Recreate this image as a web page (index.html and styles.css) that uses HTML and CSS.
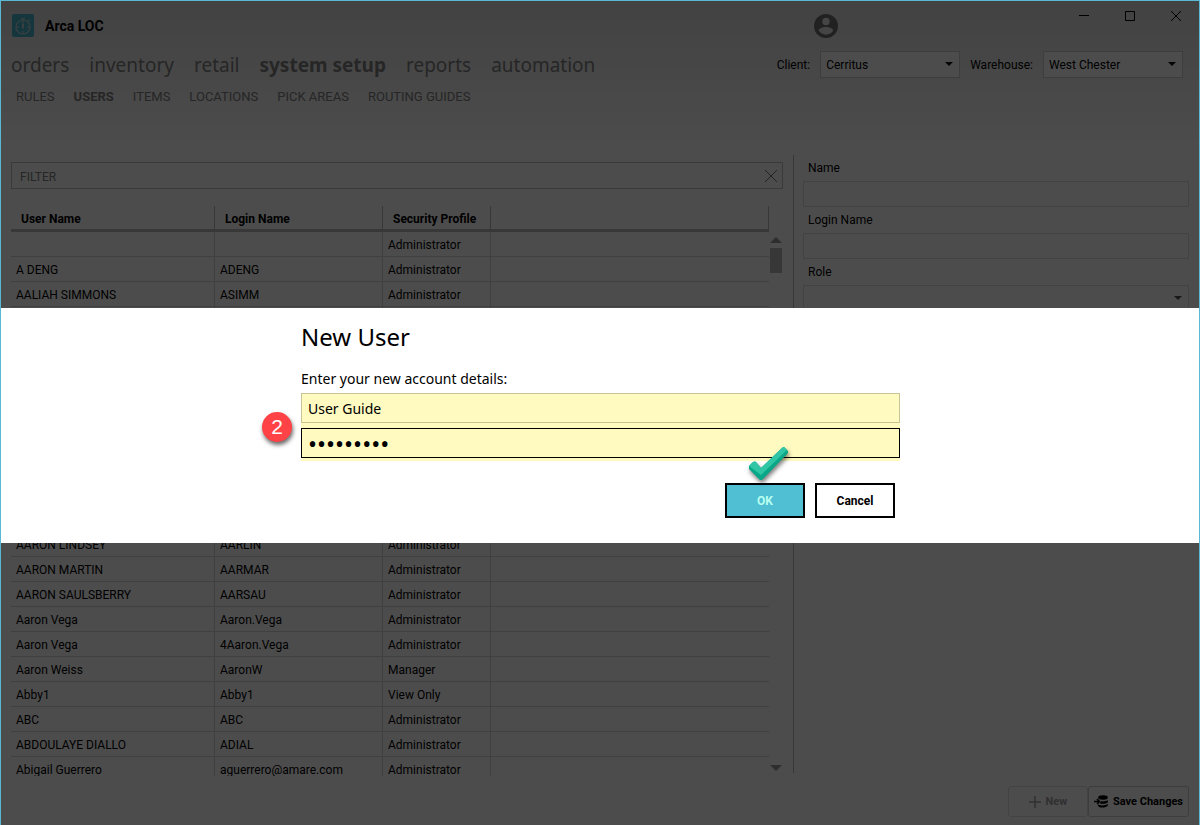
FILE: index.html
```html
<!DOCTYPE html>
<html lang="en">
<head>
<meta charset="utf-8">
<title>Arca LOC</title>
<link rel="stylesheet" href="styles.css">
</head>
<body>
<div class="window">
  <header class="titlebar">
    <svg class="logo" viewBox="0 0 22 23" aria-hidden="true">
      <rect width="22" height="23" rx="2" fill="#48b4cc"/>
      <g fill="none" stroke="#c4d8dc" stroke-width="1.2">
        <circle cx="11" cy="13" r="7"/>
        <path d="M11 6V4M9 4.500h4M11 7v2M11 17v3M4 13h3M15 13h3M16 7l2-1"/>
        <path d="M11 9.500v5" stroke-width="2"/>
      </g>
    </svg>
    <h1 class="app-name">Arca LOC</h1>
    <div class="title-right">
      <button class="avatar" aria-label="Account">
        <svg viewBox="0 0 24 24" width="24" height="24"><circle cx="12" cy="12" r="12" fill="#707070"/><circle cx="12" cy="7.500" r="3.700" fill="#e6e6e6"/><path d="M4.800 16.800c0-2.400 4.600-3.700 7.200-3.700s7.200 1.300 7.200 3.700c-1.500 2.300-4.200 3.900-7.200 3.900s-5.700-1.600-7.200-3.900z" fill="#e6e6e6"/></svg>
      </button>
      <div class="window-controls">
        <button class="win-btn" aria-label="Minimize"><svg viewBox="0 0 10 10"><path d="M0 4.500h10"/></svg></button>
        <button class="win-btn" aria-label="Maximize"><svg viewBox="0 0 10 10"><path d="M.5.5h9v9h-9z"/></svg></button>
        <button class="win-btn" aria-label="Close"><svg viewBox="0 0 10 10"><path d="M0 0l10 10M10 0L0 10"/></svg></button>
      </div>
    </div>
  </header>

  <div class="navbar">
    <nav class="main-nav" aria-label="Main">
      <a href="#">orders</a><a href="#">inventory</a><a href="#">retail</a><a href="#" class="current">system setup</a><a href="#">reports</a><a href="#">automation</a>
    </nav>
    <div class="context">
      <label for="client">Client:</label>
      <span class="select-box"><select id="client"><option>Cerritus</option></select></span>
      <label for="warehouse">Warehouse:</label>
      <span class="select-box"><select id="warehouse"><option>West Chester</option></select></span>
    </div>
  </div>
  <nav class="sub-nav" aria-label="System setup">
    <a href="#">RULES</a><a href="#" class="current">USERS</a><a href="#">ITEMS</a><a href="#">LOCATIONS</a><a href="#">PICK AREAS</a><a href="#">ROUTING GUIDES</a>
  </nav>

  <main class="workspace">
    <section class="list-pane">
      <div class="filter">
        <input type="text" placeholder="FILTER" aria-label="Filter">
        <button class="clear" aria-label="Clear filter"><svg viewBox="0 0 12 12" width="12" height="12"><path d="M0 0l12 12M12 0L0 12"/></svg></button>
      </div>
      <div class="grid">
        <div class="table-clip">
          <table class="users">
            <colgroup><col class="c-user"><col class="c-login"><col class="c-profile"><col></colgroup>
            <thead><tr><th>User Name</th><th>Login Name</th><th>Security Profile</th><th></th></tr></thead>
            <tbody>
              <tr><td></td><td></td><td>Administrator</td><td></td></tr>
              <tr><td>A DENG</td><td>ADENG</td><td>Administrator</td><td></td></tr>
              <tr><td>AALIAH SIMMONS</td><td>ASIMM</td><td>Administrator</td><td></td></tr>
              <tr><td></td><td></td><td></td><td></td></tr>
              <tr><td></td><td></td><td></td><td></td></tr>
              <tr><td></td><td></td><td></td><td></td></tr>
              <tr><td></td><td></td><td></td><td></td></tr>
              <tr><td></td><td></td><td></td><td></td></tr>
              <tr><td></td><td></td><td></td><td></td></tr>
              <tr><td></td><td></td><td></td><td></td></tr>
              <tr><td></td><td></td><td></td><td></td></tr>
              <tr><td></td><td></td><td></td><td></td></tr>
              <tr><td>AARON LINDSEY</td><td>AARLIN</td><td>Administrator</td><td></td></tr>
              <tr><td>AARON MARTIN</td><td>AARMAR</td><td>Administrator</td><td></td></tr>
              <tr><td>AARON SAULSBERRY</td><td>AARSAU</td><td>Administrator</td><td></td></tr>
              <tr><td>Aaron Vega</td><td>Aaron.Vega</td><td>Administrator</td><td></td></tr>
              <tr><td>Aaron Vega</td><td>4Aaron.Vega</td><td>Administrator</td><td></td></tr>
              <tr><td>Aaron Weiss</td><td>AaronW</td><td>Manager</td><td></td></tr>
              <tr><td>Abby1</td><td>Abby1</td><td>View Only</td><td></td></tr>
              <tr><td>ABC</td><td>ABC</td><td>Administrator</td><td></td></tr>
              <tr><td>ABDOULAYE DIALLO</td><td>ADIAL</td><td>Administrator</td><td></td></tr>
              <tr><td>Abigail Guerrero</td><td>aguerrero@amare.com</td><td>Administrator</td><td></td></tr>
            </tbody>
          </table>
        </div>
        <div class="scrollbar" aria-hidden="true">
          <span class="arrow-up"></span><span class="thumb"></span><span class="arrow-down"></span>
        </div>
      </div>
    </section>
    <section class="detail-pane">
      <label for="name">Name</label>
      <input id="name" type="text">
      <label for="login">Login Name</label>
      <input id="login" type="text">
      <label for="role">Role</label>
      <span class="select-box small"><select id="role"><option></option></select></span>
    </section>
  </main>

  <footer class="actions">
    <button class="action" disabled><svg viewBox="0 0 12 12" width="12" height="12"><path d="M6 0v12M0 6h12" stroke="currentColor" stroke-width="1.500"/></svg>New</button>
    <button class="action save"><svg viewBox="0 0 14 13" width="14" height="13"><ellipse cx="9" cy="2.500" rx="4.800" ry="2.200"/><path d="M5 5.500c2 1.300 6.500 1.300 8.800-.5v2.200C12 9 8 9.200 5.500 8.200L7 6.700zM4 9.500c3 1.500 8 1.200 9.800-.7v1.700c-2 2.600-8.500 2.800-9.800.2z"/><path d="M0 6.500h5M3 4l2.500 2.500L3 9" fill="none" stroke="currentColor" stroke-width="1.500"/></svg>Save Changes</button>
  </footer>

  <div class="overlay">
    <div class="dialog" role="dialog" aria-modal="true" aria-labelledby="dialog-title">
      <form class="dialog-body">
        <h2 id="dialog-title">New User</h2>
        <p id="dialog-text">Enter your new account details:</p>
        <div class="fields">
          <input type="text" value="User Guide" aria-label="User name">
          <input class="focused" type="password" value="userguide" aria-label="Password">
          <span class="step">2</span>
        </div>
        <div class="buttons">
          <button type="button" class="ok">OK</button>
          <button type="button">Cancel</button>
          <svg class="check" viewBox="0 0 44 38" aria-hidden="true">
            <path d="M2 20l4-4q2-1 3 0l5 6L35 2q2-2 3 0l3 3v2L15 34h-2L2 23z" fill="#08a787"/>
            <path d="M2 20l4-4q2-1 3 0l5 6L35 2q2-2 3 0l2 2L14 29z" fill="#30c5a5"/>
          </svg>
        </div>
      </form>
    </div>
  </div>
</div>
</body>
</html>
```
FILE: styles.css
```css
* { box-sizing: border-box; }

body {
  margin: 0;
  font: 12px/16px Roboto, "Noto Sans", sans-serif;
  color: #000;
}

button, input, select { font: inherit; color: inherit; margin: 0; }
button { padding: 0; border: 0; background: none; }
a { color: inherit; text-decoration: none; }
svg { display: block; flex: none; }

.window {
  position: relative;
  display: flex;
  flex-direction: column;
  height: 100vh;
  min-height: 600px;
  overflow: hidden;
  border: 1px solid #5bb8d4;
  border-bottom: 0;
  background: linear-gradient(#dedede, #fff 150px);
}

/* Title bar */
.titlebar { display: flex; align-items: center; height: 49px; padding-left: 11px; }
.logo { width: 22px; height: 23px; }
.app-name { flex: 1; margin: 0 0 0 11px; font-size: 14px; line-height: 20px; font-weight: bold; }
.title-right { display: flex; justify-content: space-between; align-items: center; align-self: stretch; width: 385px; }
.window-controls { display: flex; align-self: flex-start; }
.win-btn { display: grid; place-items: center; width: 46px; height: 30px; }
.win-btn svg { width: 10px; height: 10px; fill: none; stroke: #000; }

/* Navigation */
.navbar { display: flex; justify-content: space-between; align-items: center; height: 28px; padding: 0 16px 0 10px; }
.main-nav { display: flex; gap: 20px; padding-top: 2px; font-family: "Noto Sans", sans-serif; font-size: 19px; line-height: 28px; color: #808080; }
.sub-nav { display: flex; gap: 19px; padding: 11px 15px 0; height: 77px; font-size: 13px; color: #808080; }
.current { font-weight: bold; }
.context { display: flex; align-items: center; gap: 10px; }
.context label { padding-top: 1px; }
.select-box { position: relative; display: flex; width: 140px; }
.select-box select {
  appearance: none;
  width: 100%;
  height: 27px;
  padding: 1px 5px 0;
  border: 1px solid #ccc;
  border-radius: 0;
  background: #fff;
}
.select-box::after {
  content: "";
  position: absolute;
  top: 11px;
  right: 7px;
  border: 4px solid transparent;
  border-top-color: #111;
  border-bottom: 0;
}
.select-box.small { width: 100%; }
.select-box.small::after { border-top-color: #555; }

/* Workspace */
.workspace {
  flex: 1;
  min-height: 0;
  display: grid;
  grid-template-columns: minmax(0, 1fr) 396px;
  padding: 0 10px;
}
.list-pane { display: flex; flex-direction: column; min-height: 0; padding: 7px 10px 0 0; }
.filter { flex: none; display: flex; align-items: center; height: 27px; border: 1px solid #c4c4c4; padding: 0 5px 0 8px; }
.filter input { flex: 1; border: 0; padding: 2px 0 0; background: none; outline: 0; }
.filter input::placeholder { color: #808080; opacity: 1; }
.clear svg { fill: none; stroke: #777; }
.grid { flex: 1; min-height: 0; display: flex; margin-top: 17px; }
.table-clip { flex: 1; overflow: hidden; }
.users { width: 100%; table-layout: fixed; border-collapse: separate; border-spacing: 0; }
.c-user { width: 204px; }
.c-login { width: 168px; }
.c-profile { width: 108px; }
.users th {
  height: 26px;
  padding: 2px 10px 0;
  border-right: 1px solid #b8b8b8;
  border-bottom: 3px solid #bcbcbc;
  text-align: left;
  white-space: nowrap;
}
.users td {
  height: 25px;
  padding: 2px 5px 0;
  border-right: 1px solid #d8d8d8;
  border-bottom: 1px solid #d8d8d8;
}
.users td:last-child { border-right: 0; }
.scrollbar { display: flex; flex-direction: column; align-items: center; width: 14px; padding: 31px 0 5px; }
.arrow-up { border: 6px solid transparent; border-top: 0; border-bottom-color: #999; }
.thumb { width: 12px; height: 25px; margin: 5px 0 auto; background: #b8b8b8; }
.arrow-down { border: 6px solid transparent; border-bottom: 0; border-top-color: #999; }

.detail-pane {
  display: flex;
  flex-direction: column;
  margin-bottom: 3px;
  padding: 4px 0 0 9px;
  border-left: 1px solid #b8b8b8;
}
.detail-pane label { padding: 0 5px 4px; line-height: 18px; }
.detail-pane input { height: 26px; margin-bottom: 4px; padding: 0 5px; border: 1px solid #dcdcdc; background: #fff; }
.detail-pane select { border-color: #dcdcdc; }

.actions { display: flex; justify-content: flex-end; padding: 10px 10px 8px; }
.action {
  display: flex;
  align-items: center;
  justify-content: center;
  gap: 5px;
  height: 31px;
  min-width: 80px;
  border: 1px solid #ccc;
  border-radius: 3px;
  font-size: 11px;
  font-weight: bold;
}
.action:disabled { color: #a0a0a0; border-color: #e0e0e0; }
.action.save { min-width: 101px; }

/* Dialog */
.overlay {
  position: absolute;
  inset: 0;
  display: flex;
  align-items: center;
  padding-top: 24px;
  background: rgba(0, 0, 0, .7);
}
.dialog { width: 100%; padding: 12px 20px 25px; background: #fff; font: 14px/20px "Noto Sans", sans-serif; }
.dialog-body { max-width: 600px; margin: 0 auto; padding-left: 1px; }
.dialog h2 { margin: 0 0 15px; font-size: 24px; line-height: 34px; font-weight: normal; }
.dialog p { margin: 0 0 4px; }
.fields { position: relative; display: flex; flex-direction: column; gap: 5px; padding-bottom: 3px; background: #fffac0; }
.fields input { height: 30px; padding: 2px 6px 0; border: 1px solid #c8c496; background: #fffac0; outline: 0; }
.fields .focused { border-color: #000; font-size: 24px; }
.step {
  position: absolute;
  left: -39px;
  top: 19px;
  width: 30px;
  height: 30px;
  border-radius: 50%;
  background: #ff4245;
  box-shadow: 1px 3px 4px rgba(0, 0, 0, .6);
  color: #fff;
  font: 21px/30px "Liberation Sans", sans-serif;
  text-align: center;
}
.buttons { position: relative; display: flex; justify-content: flex-end; gap: 10px; padding: 22px 5px 0 0; }
.buttons button { width: 80px; height: 35px; padding-top: 2px; border: 2px solid #000; background: #fff; font-family: Roboto, sans-serif; font-weight: bold; font-size: 12px; }
.buttons .ok { background: #50bfd3; color: #b8fff0; }
.check { position: absolute; right: 109px; top: -15px; width: 44px; height: 38px; filter: drop-shadow(1px 3px 2px rgba(0, 0, 0, .5)); }
```
